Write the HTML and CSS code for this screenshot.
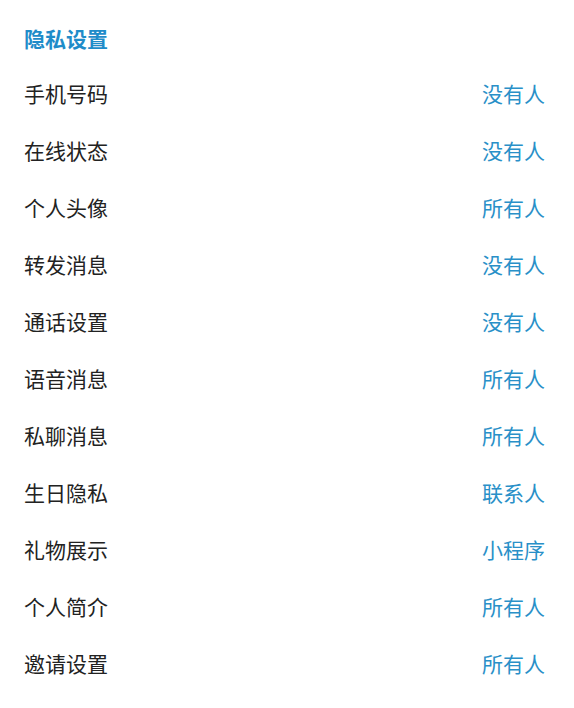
FILE: index.html
```html
<!DOCTYPE html>
<html lang="zh">
<head>
<meta charset="utf-8">
<link rel="stylesheet" href="styles.css">
</head>
<body>
<div class="page">
  <div class="title">隐私设置</div>
  <div class="row"><span class="label">手机号码</span><span class="value">没有人</span></div>
  <div class="row"><span class="label">在线状态</span><span class="value">没有人</span></div>
  <div class="row"><span class="label">个人头像</span><span class="value">所有人</span></div>
  <div class="row"><span class="label">转发消息</span><span class="value">没有人</span></div>
  <div class="row"><span class="label">通话设置</span><span class="value">没有人</span></div>
  <div class="row"><span class="label">语音消息</span><span class="value">所有人</span></div>
  <div class="row"><span class="label">私聊消息</span><span class="value">所有人</span></div>
  <div class="row"><span class="label">生日隐私</span><span class="value">联系人</span></div>
  <div class="row"><span class="label">礼物展示</span><span class="value">小程序</span></div>
  <div class="row"><span class="label">个人简介</span><span class="value">所有人</span></div>
  <div class="row"><span class="label">邀请设置</span><span class="value">所有人</span></div>
</div>
</body>
</html>
```
FILE: styles.css
```css
html, body {
  margin: 0;
  padding: 0;
  background: #ffffff;
}
.page {
  font-family: "Noto Sans CJK SC", "Noto Sans", sans-serif;
  padding: 12px 29px 0 24px;
}
.title {
  height: 52px;
  line-height: 52px;
  font-size: 21px;
  font-weight: 700;
  color: #1f8cc9;
}
.row {
  display: flex;
  justify-content: space-between;
  align-items: center;
  height: 57px;
  font-size: 21px;
}
.label {
  color: #222222;
}
.value {
  color: #2990c8;
}
```
